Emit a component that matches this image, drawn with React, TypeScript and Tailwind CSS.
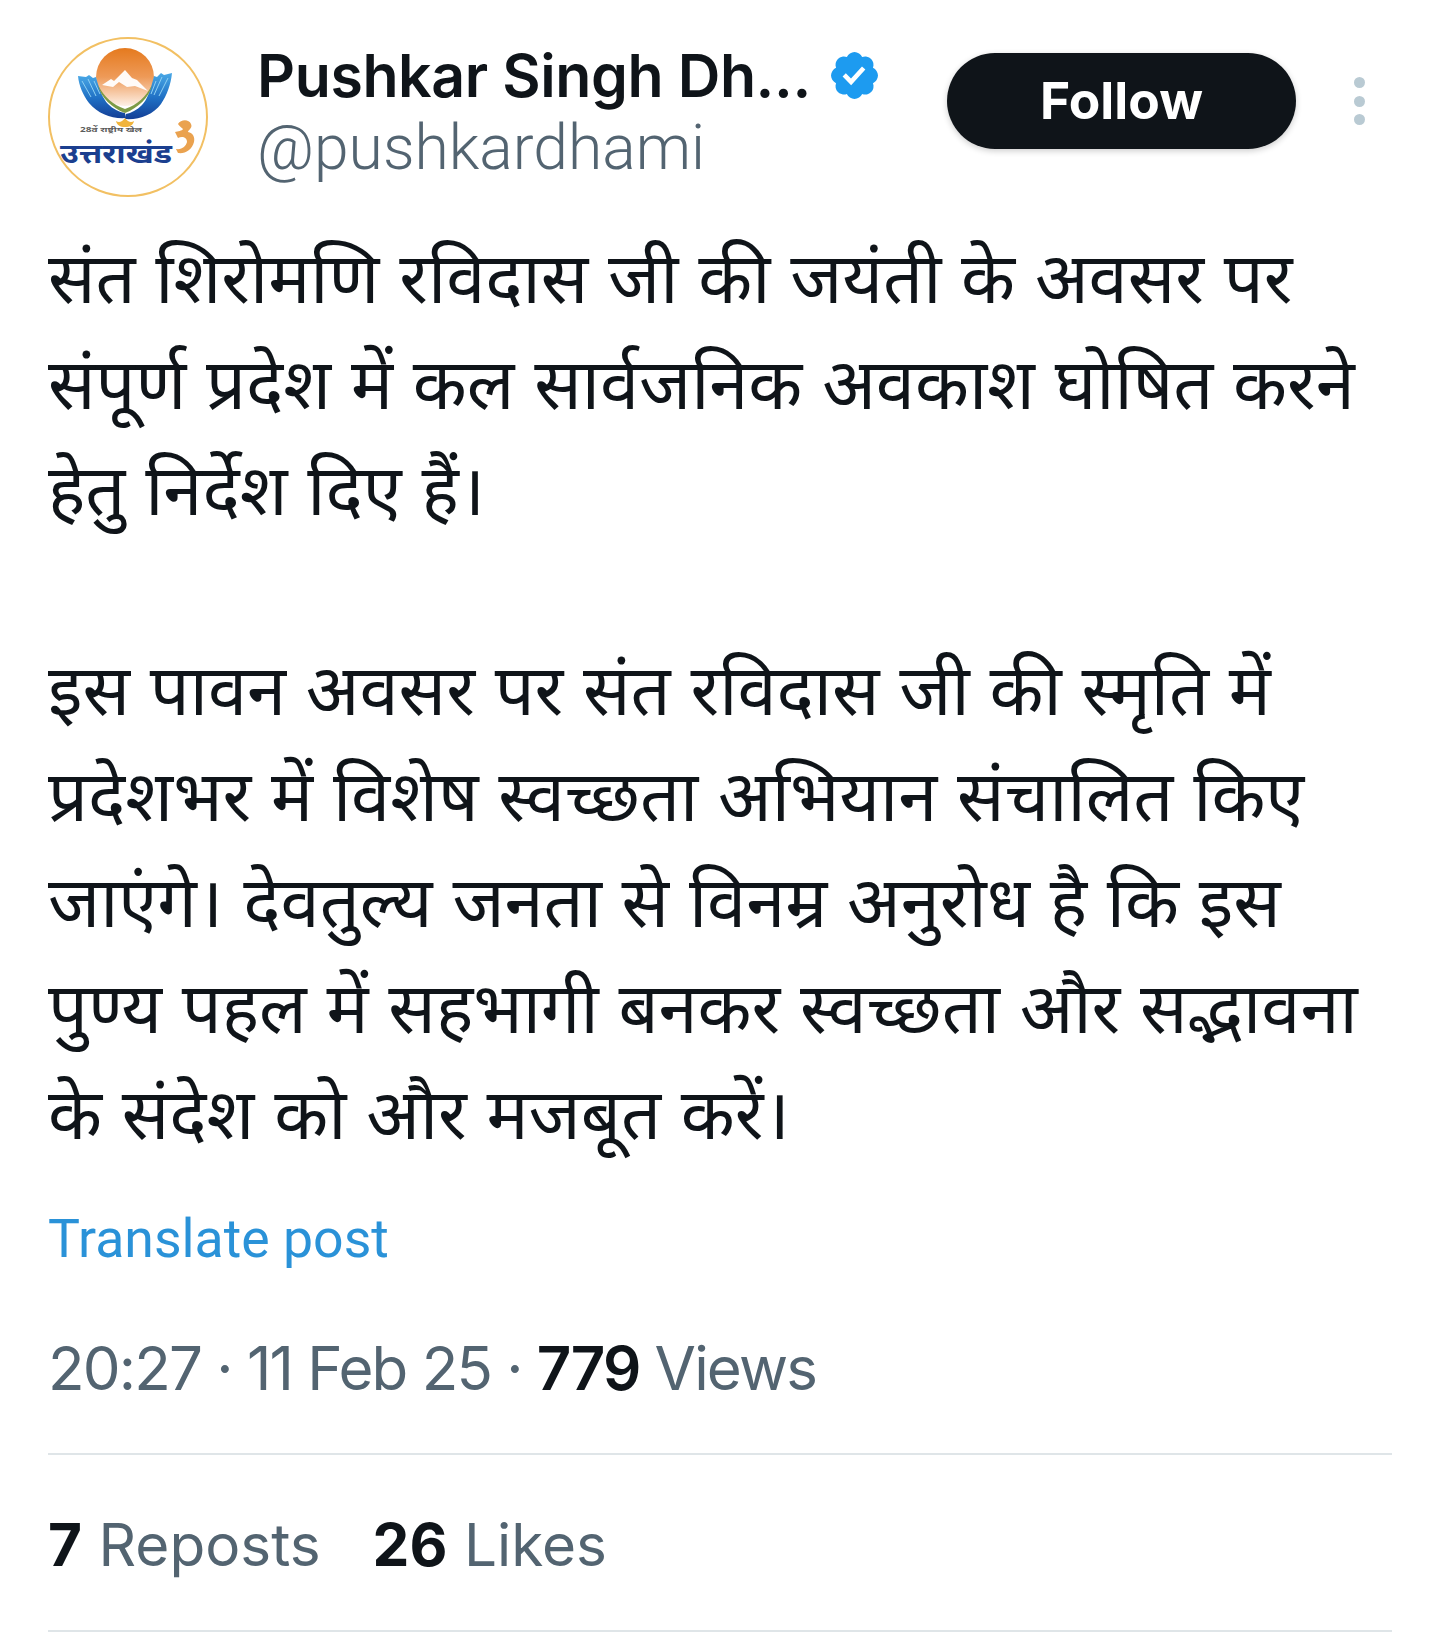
const Dots = () => (
  <div className="flex flex-col gap-[7.5px] ml-[58px] mt-[40px] shrink-0">
    <div className="w-[11px] h-[11px] rounded-full bg-[#b9cad3]" />
    <div className="w-[11px] h-[11px] rounded-full bg-[#b9cad3]" />
    <div className="w-[11px] h-[11px] rounded-full bg-[#b9cad3]" />
  </div>
);

const Badge = () => (
  <svg viewBox="0 0 22 22" className="w-[55px] h-[55px] ml-[16px] shrink-0">
    <path fill="#1d9bf0" d="M20.396 11c-.018-.646-.215-1.275-.57-1.816-.354-.54-.852-.972-1.438-1.246.223-.607.27-1.264.14-1.897-.131-.634-.437-1.218-.882-1.687-.47-.445-1.053-.75-1.687-.882-.633-.13-1.29-.083-1.897.14-.273-.587-.704-1.086-1.245-1.44S11.647 1.62 11 1.604c-.646.017-1.273.213-1.813.568s-.969.854-1.24 1.44c-.608-.223-1.267-.272-1.902-.14-.635.13-1.22.436-1.69.882-.445.47-.749 1.055-.878 1.688-.13.633-.08 1.29.144 1.896-.587.274-1.087.705-1.443 1.245-.356.54-.555 1.17-.574 1.817.02.647.218 1.276.574 1.817.356.54.856.972 1.443 1.245-.224.606-.274 1.263-.144 1.896.13.634.433 1.218.877 1.688.47.443 1.054.747 1.687.878.633.132 1.29.084 1.897-.136.274.586.705 1.084 1.246 1.439.54.354 1.17.551 1.816.569.647-.016 1.276-.213 1.817-.567s.972-.854 1.245-1.44c.604.239 1.266.296 1.903.164.636-.132 1.22-.447 1.68-.907.46-.46.776-1.044.908-1.681s.075-1.299-.165-1.903c.586-.274 1.084-.705 1.439-1.246.354-.54.551-1.17.569-1.816z" />
    <path fill="#fff" d="M9.662 14.85l-3.429-3.428 1.293-1.302 2.072 2.072 4.4-4.794 1.347 1.246z" />
  </svg>
);

const Logo = () => (
  <div className="w-[160px] h-[160px] rounded-full border-[2px] border-[#f2c063] bg-white shrink-0 overflow-hidden">
    <svg viewBox="0 0 156 156" className="w-full h-full">
      <defs>
        <linearGradient id="sun" x1="0" y1="0" x2="0" y2="1">
          <stop offset="0" stopColor="#e57a1e" />
          <stop offset="0.5" stopColor="#ee9a58" />
          <stop offset="1" stopColor="#fdf0e6" />
        </linearGradient>
        <linearGradient id="wing" x1="0" y1="0" x2="0" y2="1">
          <stop offset="0" stopColor="#49a8e6" />
          <stop offset="0.55" stopColor="#1f6fc4" />
          <stop offset="1" stopColor="#143f96" />
        </linearGradient>
      </defs>
      <circle cx="75" cy="38" r="29" fill="url(#sun)" />
      <path d="M52 46l9-6 3 2 11-11 7 8 5 2 11 11-13-5-8 1-8-5-6 5z" fill="#fff" fillOpacity="0.95" />
      <path d="M28 37l8 1 3-2 4 3 3-1c3 12 7 22 12 27 5 5 11 8 17 9l1 5c-14 1-28-4-37-15-6-8-10-17-11-27z" fill="url(#wing)" />
      <path d="M122 34l-8 2-3-2-4 4-3-1c-3 13-7 24-12 29-5 5-11 8-16 9l-1 5c14 1 28-4 36-15 6-9 10-20 11-31z" fill="url(#wing)" />
      <path d="M32 42l9 16M38 40l8 17M44 42l6 13" stroke="#8fd0f2" strokeWidth="1" fill="none" />
      <path d="M118 39l-9 18M112 38l-8 18M106 42l-5 13" stroke="#8fd0f2" strokeWidth="1" fill="none" />
      <path d="M48 46c3 13 14 23 27 28 13-5 24-15 27-28-6 12-15 20-27 24-12-4-21-12-27-24z" fill="#7d9b46" />
      <path d="M66 82c3 2 6 1 9-3 3 4 6 5 9 3-1 4-4 6-9 6s-8-2-9-6z" fill="#f0b43c" />
      <text x="30" y="93" textLength="62" lengthAdjust="spacingAndGlyphs" fontSize="7" fontWeight="700" fill="#5b5b5b" fontFamily="'Noto Sans',sans-serif">28वें राष्ट्रीय खेल</text>
      <text x="10" y="124" textLength="112" lengthAdjust="spacingAndGlyphs" fontSize="27" fontWeight="700" fill="#1b3f8f" fontFamily="'Noto Sans',sans-serif">उत्तराखंड</text>
      <path d="M128 85c3-5 11-5 13 0 2 4-3 6-3 8 5 1 7 5 6 10-2 8-9 12-16 11l-2-4c6 1 10-3 11-7 0-5-5-6-9-4l-3-6c3-1 7-1 8-3-2-2-4-3-5-5z" fill="#eaa24f" />
    </svg>
  </div>
);

const lines1 = [
  "संत शिरोमणि रविदास जी की जयंती के अवसर पर",
  "संपूर्ण प्रदेश में कल सार्वजनिक अवकाश घोषित करने",
  "हेतु निर्देश दिए हैं।",
];
const lines2 = [
  "इस पावन अवसर पर संत रविदास जी की स्मृति में",
  "प्रदेशभर में विशेष स्वच्छता अभियान संचालित किए",
  "जाएंगे। देवतुल्य जनता से विनम्र अनुरोध है कि इस",
  "पुण्य पहल में सहभागी बनकर स्वच्छता और सद्भावना",
  "के संदेश को और मजबूत करें।",
];

export default function App() {
  return (
    <div className="w-[1440px] h-[1652px] bg-white overflow-hidden font-['Inter','Noto_Sans',sans-serif] text-[#0f1419]">
      <div className="flex items-start pl-[48px] pt-[37px]">
        <Logo />
        <div className="ml-[49px] mt-[1px] w-[687px] shrink-0">
          <div className="flex items-center h-[75px]">
            <span className="text-[59px] font-semibold leading-none tracking-[-0.4px] whitespace-nowrap">Pushkar Singh Dh...</span>
            <Badge />
          </div>
          <div className="text-[62.4px] leading-[70px] text-[#536471] font-['Roboto',sans-serif] font-light">@pushkardhami</div>
        </div>
        <div className="ml-[3px] mt-[16px] w-[349px] h-[96px] rounded-full bg-[#0f1419] text-white flex items-center justify-center text-[51.5px] font-bold shadow-[0_2px_6px_rgba(0,0,0,0.2)] shrink-0">Follow</div>
        <Dots />
      </div>
      <div className="pl-[48px] pt-[28px] text-[#0f1419] text-[70.3px] leading-[106px] whitespace-nowrap">
        {lines1.map((l) => <div key={l}>{l}</div>)}
        <div className="h-[94px]" />
        {lines2.map((l) => <div key={l}>{l}</div>)}
      </div>
      <div className="pl-[48px] pt-[42px] text-[53.6px] leading-[60px] text-[#2a92d8] font-['Roboto',sans-serif]">Translate post</div>
      <div className="pl-[48px] pt-[63px] text-[60px] leading-[72px] text-[#536471] tracking-[-1.8px] whitespace-nowrap">
        20:27 · 11 Feb 25 · <span className="text-[#0f1419] font-semibold">779</span> Views
      </div>
      <div className="mx-[48px] mt-[49px] border-t-[2px] border-[#dfe5e8]" />
      <div className="pl-[48px] pt-[55px] text-[58.5px] leading-[70px] text-[#536471] flex">
        <span className="mr-[52px]"><span className="text-[#0f1419] font-bold">7</span> Reposts</span>
        <span><span className="text-[#0f1419] font-bold">26</span> Likes</span>
      </div>
      <div className="mx-[48px] mt-[50px] border-t-[2px] border-[#dfe5e8]" />
    </div>
  );
}
